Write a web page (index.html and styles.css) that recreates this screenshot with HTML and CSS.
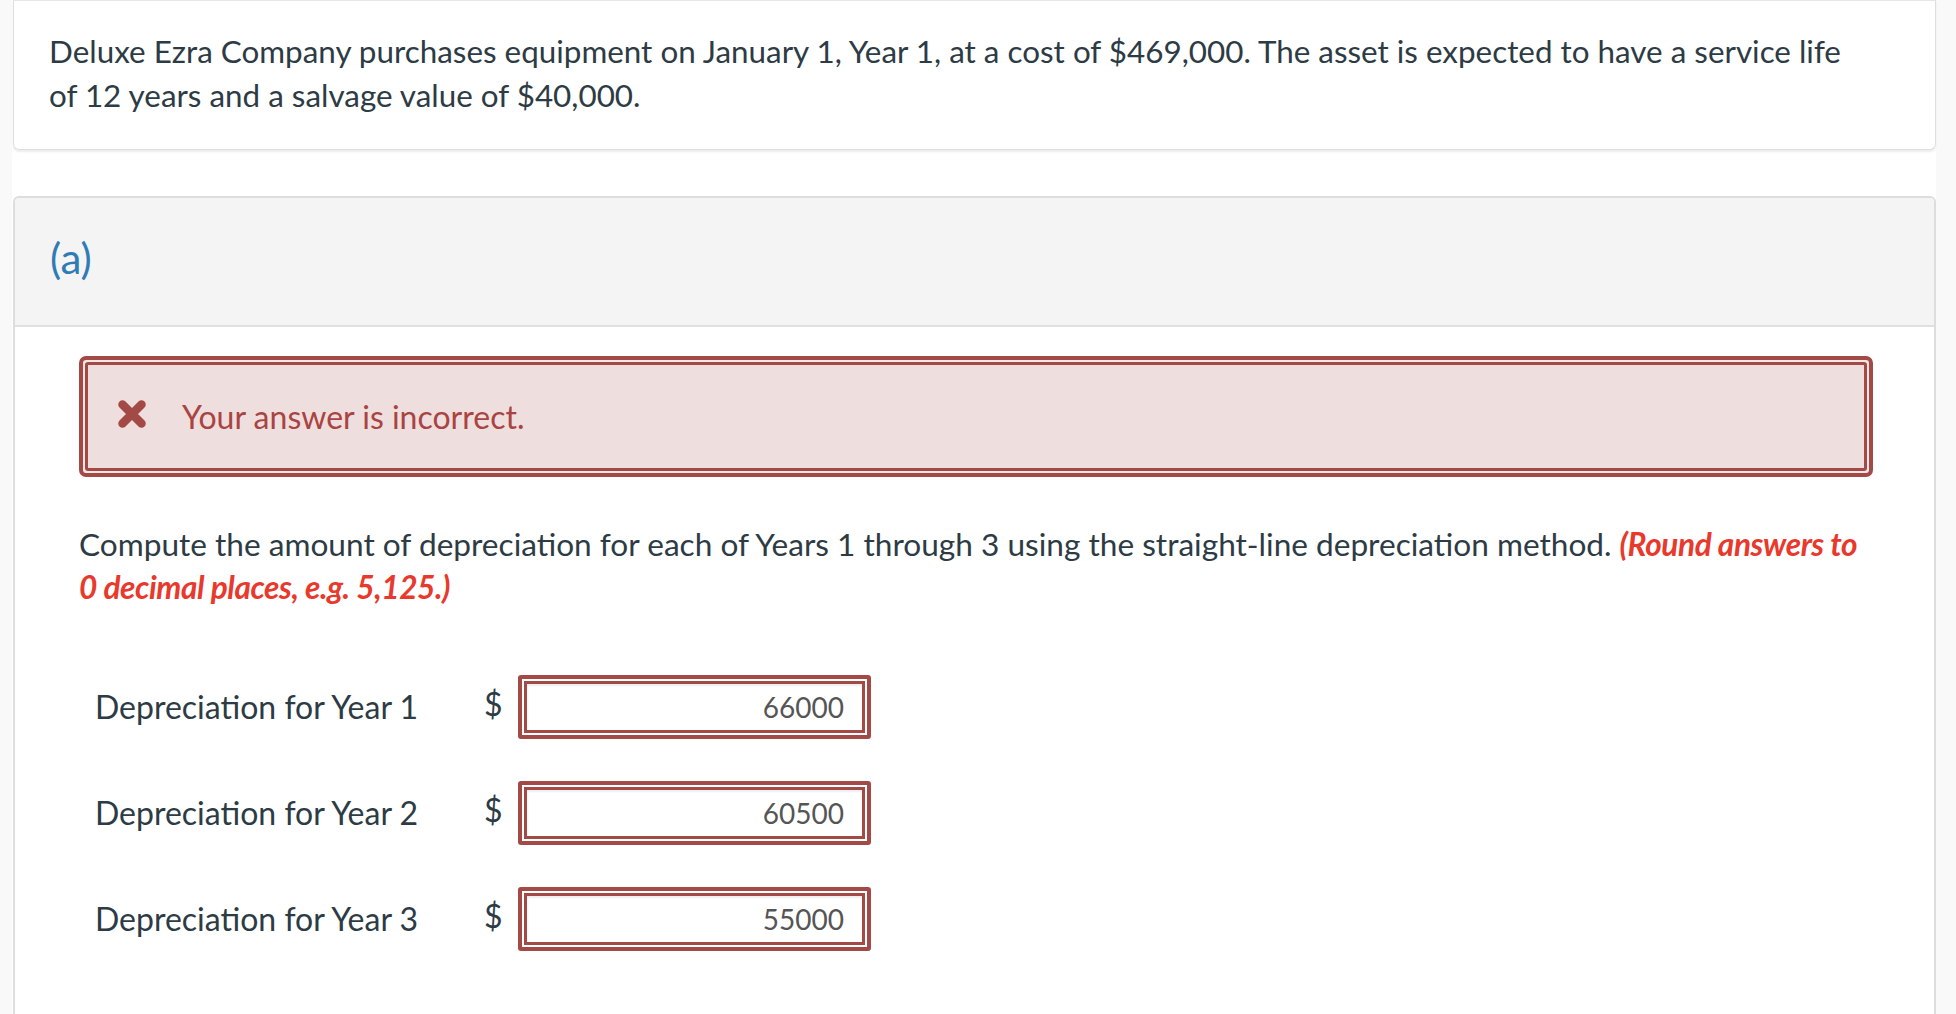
FILE: index.html
```html
<!DOCTYPE html>
<html lang="en">
<head>
<meta charset="utf-8">
<title>Depreciation</title>
<link rel="stylesheet" href="styles.css">
</head>
<body>
<div class="page">
  <div class="card intro">
    <p>Deluxe Ezra Company purchases equipment on January 1, Year 1, at a cost of $469,000. The asset is expected to have a service life of 12 years and a salvage value of $40,000.</p>
  </div>
  <div class="card part">
    <div class="part-head"><span class="part-label">(a)</span></div>
    <div class="part-body">
      <div class="alert">
        <div class="alert-inner">
          <svg class="x-icon" width="30" height="30" viewBox="0 0 30 30" aria-hidden="true"><path d="M5.5 5.5 L24.5 24.5 M24.5 5.5 L5.5 24.5" stroke="#a34a47" stroke-width="8.5" stroke-linecap="round" fill="none"/></svg>
          <span class="alert-text">Your answer is incorrect.</span>
        </div>
      </div>
      <p class="question">Compute the amount of depreciation for each of Years 1 through 3 using the straight-line depreciation method. <em class="hint">(Round answers to 0 decimal places, e.g. 5,125.)</em></p>
      <div class="rows">
        <div class="row">
          <span class="label">Depreciation for Year 1</span>
          <span class="cur">$</span>
          <span class="field"><input type="text" value="66000"></span>
        </div>
        <div class="row">
          <span class="label">Depreciation for Year 2</span>
          <span class="cur">$</span>
          <span class="field"><input type="text" value="60500"></span>
        </div>
        <div class="row">
          <span class="label">Depreciation for Year 3</span>
          <span class="cur">$</span>
          <span class="field"><input type="text" value="55000"></span>
        </div>
      </div>
    </div>
  </div>
</div>
</body>
</html>
```

FILE: styles.css
```css
html, body {
  margin: 0;
  padding: 0;
}
body {
  background: #f9f9f9;
  font-family: Lato, "Open Sans", sans-serif;
  color: #2d3b45;
  font-size: 31px;
  line-height: 44px;
  overflow: hidden;
}
.page {
  margin-left: 12px;
  width: 1924px;
  min-height: 1014px;
  background: #ffffff;
}
.card {
  box-sizing: border-box;
  margin-left: 1px;
  width: 1923px;
}
.intro {
  border: 1px solid #dedede;
  border-top-color: #e6e6e6;
  border-radius: 0 0 6px 6px;
  box-shadow: 0 2px 2px rgba(0, 0, 0, 0.08);
  padding: 28px 75px 32px 35px;
  font-size: 31.4px;
}
.intro p {
  margin: 0;
}
.part {
  margin-top: 46px;
  border: 2px solid #dddddd;
  border-bottom: none;
  border-radius: 6px 6px 0 0;
  min-height: 820px;
}
.part-head {
  background: #f4f4f4;
  border-bottom: 2px solid #e0e0e0;
  padding: 38px 36px 45px 35px;
  border-radius: 4px 4px 0 0;
  font-size: 42px;
  line-height: 44px;
}
.part-label {
  color: #2f7bb6;
}
.part-body {
  padding: 29px 61px 0 64px;
  font-size: 32px;
}
.alert {
  border: 4px solid #a34a47;
  border-radius: 7px;
  padding: 2px;
  background: #f3e6e6;
}
.alert-inner {
  border: 3px solid #a34a47;
  border-radius: 3px;
  background: #efdede;
  height: 109px;
  box-sizing: border-box;
  display: flex;
  align-items: center;
  padding-left: 29px;
}
.x-icon {
  display: block;
  flex: none;
  margin-top: -6px;
}
.alert-text {
  color: #a94442;
  margin-left: 35px;
}
.question {
  margin: 46px 0 0 0;
  font-size: 31.6px;
  line-height: 43px;
}
.hint {
  color: #e8392c;
  font-weight: 700;
  font-style: italic;
  letter-spacing: -0.4px;
}
.rows {
  margin-top: 66px;
  padding-left: 16px;
  display: flex;
  flex-direction: column;
  gap: 42px;
}
.row {
  display: flex;
  align-items: center;
}
.label {
  width: 389px;
  flex: none;
}
.cur {
  width: 34px;
  flex: none;
  margin-top: -6px;
}
.field {
  display: block;
  border: 4px solid #a34a47;
  border-radius: 3px;
  padding: 2px;
  background: #ffffff;
}
.field input {
  display: block;
  box-sizing: border-box;
  width: 341px;
  height: 52px;
  border: 3px solid #a34a47;
  border-radius: 0;
  margin: 0;
  padding: 0 18px 0 10px;
  text-align: right;
  font-family: Lato, "Open Sans", sans-serif;
  font-size: 28px;
  color: #555555;
  background: #ffffff;
  box-shadow: inset 0 2px 2px rgba(0, 0, 0, 0.07);
  outline: none;
}
```
